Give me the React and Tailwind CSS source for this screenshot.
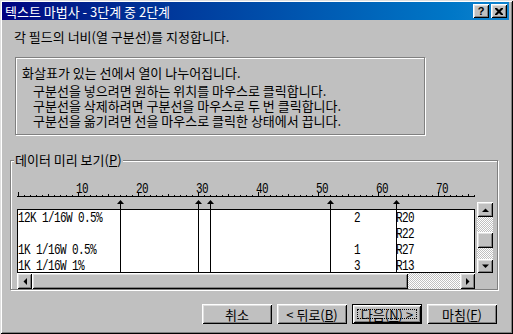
import React from 'react';

const raised =
  'shadow-[inset_1px_1px_0_#fff,inset_-1px_-1px_0_#000,inset_2px_2px_0_#dfdfdf,inset_-2px_-2px_0_#808080]';
const etched = 'border border-[#808080] shadow-[inset_1px_1px_0_#fff,1px_1px_0_#fff]';
const dither = 'bg-[repeating-conic-gradient(#c0c0c0_0_25%,#fff_0_50%)] bg-[length:2px_2px]';

const breaks = [17, 30, 32, 52, 63];

const row = (a, b, c) => (a.padEnd(56, ' ') + b).padEnd(63, ' ') + c;
const rows = [
  row('12K 1/16W 0.5%', '2', 'R20'),
  row('', ' ', 'R22'),
  row('1K 1/16W 0.5%', '1', 'R27'),
  row('1K 1/16W 1%', '3', 'R13'),
];

function Arrow({ dir }) {
  const pts = {
    up: '0,4 7,4 3.5,0.5',
    down: '0,0.5 7,0.5 3.5,4',
    left: '4,0 4,7 0.5,3.5',
    right: '0,0 0,7 3.5,3.5',
  }[dir];
  const vert = dir === 'up' || dir === 'down';
  return (
    <svg width={vert ? 7 : 4} height={vert ? 4 : 7} className="block">
      <polygon points={pts} fill="#000" />
    </svg>
  );
}

function Ruler() {
  const ticks = [];
  for (let n = 0; n <= 76; n++) {
    const h = n % 10 === 0 ? 4 : n % 5 === 0 ? 2 : 1;
    ticks.push(<rect key={n} x={1 + 6 * n} y={18 - h} width="1" height={h} fill="#000" />);
  }
  const labels = [10, 20, 30, 40, 50, 60, 70];
  return (
    <svg width="458" height="31" className="block">
      <rect x="0" y="18" width="458" height="1" fill="#000" />
      {ticks}
      {labels.map((l) => (
        <text
          key={l}
          transform={`translate(${1 + 6 * l - 2},15) scale(1,1.25)`}
          fontFamily="Liberation Mono, monospace"
          fontSize="11"
          letterSpacing="-0.6"
          fill="#000"
        >
          {l}
        </text>
      ))}
      {breaks.map((b) => {
        const x = 1 + 6 * b;
        return (
          <g key={b}>
            <polygon points={`${x - 3},26 ${x + 4},26 ${x + 0.5},22`} fill="#000" />
            <rect x={x} y="25" width="1" height="6" fill="#000" />
          </g>
        );
      })}
    </svg>
  );
}

function WinButton({ children, isDefault }) {
  return (
    <div
      className={`relative w-[70px] h-[20px] flex items-center justify-center text-[13px] leading-none ${
        isDefault ? 'border border-black' : ''
      } ${raised}`}
    >
      {isDefault && <div className="absolute inset-[4px] border border-dotted border-black" />}
      <span className="relative">{children}</span>
    </div>
  );
}

export default function App() {
  return (
    <div
      className="w-[513px] h-[334px] overflow-hidden bg-[#c0c0c0] text-black font-['Noto_Sans_CJK_KR',sans-serif] flex flex-col pt-[2px] pl-[2px] pr-[4px] shadow-[inset_1px_1px_0_#dfdfdf,inset_-1px_-1px_0_#000,inset_2px_2px_0_#fff,inset_-2px_-2px_0_#808080]"
    >
      {/* title bar */}
      <div className="h-[18px] flex items-center bg-linear-to-r from-[#000080] to-[#1084d0] pl-[3px] pr-[2px]">
        <span className="text-white text-[13px] leading-none">텍스트 마법사 - 3단계 중 2단계</span>
        <div className="ml-auto flex items-center">
          <div className={`w-[16px] h-[14px] bg-[#c0c0c0] flex items-center justify-center ${raised}`}>
            <span className="font-['Liberation_Sans',sans-serif] font-bold text-[11px] leading-none">?</span>
          </div>
          <div className={`ml-[2px] w-[16px] h-[14px] bg-[#c0c0c0] flex items-center justify-center ${raised}`}>
            <svg width="8" height="7" className="block">
              <path d="M0 0h2l2 2 2-2h2v1l-2.5 2.5L8 6v1H6L4 5 2 7H0V6l2.5-2.5L0 1z" fill="#000" />
            </svg>
          </div>
        </div>
      </div>

      <div className="mt-[10px] pl-[12px] text-[13px] leading-[14px]">각 필드의 너비(열 구분선)를 지정합니다.</div>

      <div className={`mt-[13px] ml-[13px] w-[410px] h-[78px] pt-[8px] text-[13px] ${etched}`}>
        <div className="pl-[6px] leading-[14px]">화살표가 있는 선에서 열이 나누어집니다.</div>
        <div className="mt-[3px] pl-[17px] leading-[15px]">
          <div className="h-[15px]">구분선을 넣으려면 원하는 위치를 마우스로 클릭합니다.</div>
          <div className="h-[15px]">구분선을 삭제하려면 구분선을 마우스로 두 번 클릭합니다.</div>
          <div className="h-[15px]">구분선을 옮기려면 선을 마우스로 클릭한 상태에서 끕니다.</div>
        </div>
      </div>

      {/* preview group */}
      <div className={`relative mt-[25px] ml-[8px] w-[488px] h-[130px] ${etched} flex pl-[6px] pt-[17px]`}>
        <span className="absolute -top-[8px] left-[3px] px-[1px] bg-[#c0c0c0] text-[13px] leading-[14px]">
          데이터 미리 보기(<span className="underline">P</span>)
        </span>
        <div className="w-[458px] flex flex-col">
          <Ruler />
          <div className="relative h-[64px] bg-white border border-black overflow-hidden">
            {breaks.map((b) => (
              <div key={b} className="absolute top-0 bottom-0 w-px bg-black" style={{ left: 6 * b }} />
            ))}
            <div className="relative font-['Liberation_Mono',monospace] text-[11px] tracking-[-0.6px] leading-[16px] whitespace-pre">
              {rows.map((r, i) => (
                <div key={i} className="h-[16px] scale-y-125 origin-center">
                  {r}
                </div>
              ))}
            </div>
          </div>
          <div className="h-[16px] flex">
            <div className={`w-[15px] h-[16px] flex items-center justify-center ${raised}`}>
              <Arrow dir="left" />
            </div>
            <div className={`w-[376px] h-[16px] ${raised}`} />
            <div className={`flex-1 h-[16px] ${dither}`} />
            <div className={`w-[15px] h-[16px] flex items-center justify-center ${raised}`}>
              <Arrow dir="right" />
            </div>
          </div>
        </div>
        <div className="ml-[2px] pt-[24px]">
          <div className="w-[16px] h-[71px] flex flex-col">
            <div className={`h-[15px] flex items-center justify-center ${raised}`}>
              <Arrow dir="up" />
            </div>
            <div className={`h-[15px] ${dither}`} />
            <div className={`h-[16px] ${raised}`} />
            <div className={`flex-1 ${dither}`} />
            <div className={`h-[14px] flex items-center justify-center ${raised}`}>
              <Arrow dir="down" />
            </div>
          </div>
        </div>
      </div>

      {/* buttons */}
      <div className="mt-[14px] ml-[200px] flex gap-[5px]">
        <WinButton>취소</WinButton>
        <WinButton>
          &lt; 뒤로(<span className="underline">B</span>)
        </WinButton>
        <WinButton isDefault>
          다음(<span className="underline">N</span>) &gt;
        </WinButton>
        <WinButton>
          마침(<span className="underline">F</span>)
        </WinButton>
      </div>
    </div>
  );
}
